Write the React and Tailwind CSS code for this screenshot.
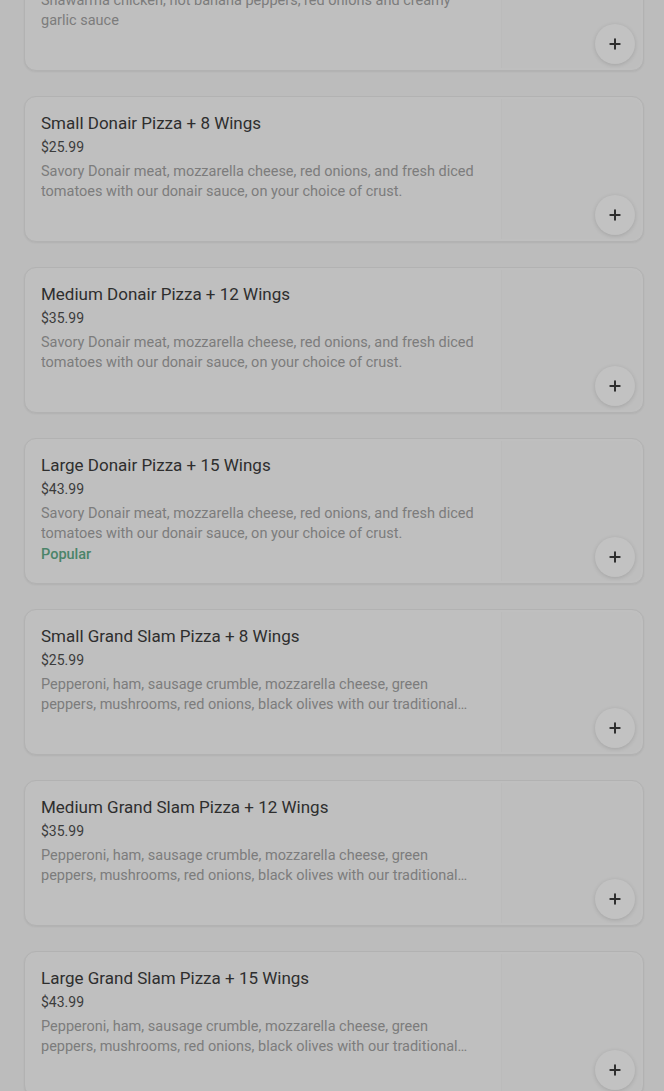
import { Plus } from "lucide-react";

const items = [
  {
    name: "Shawarma Pizza + 8 Wings",
    price: "$25.99",
    desc: "Shawarma chicken, hot banana peppers, red onions and creamy garlic sauce",
  },
  {
    name: "Small Donair Pizza + 8 Wings",
    price: "$25.99",
    desc: "Savory Donair meat, mozzarella cheese, red onions, and fresh diced tomatoes with our donair sauce, on your choice of crust.",
  },
  {
    name: "Medium Donair Pizza + 12 Wings",
    price: "$35.99",
    desc: "Savory Donair meat, mozzarella cheese, red onions, and fresh diced tomatoes with our donair sauce, on your choice of crust.",
  },
  {
    name: "Large Donair Pizza + 15 Wings",
    price: "$43.99",
    desc: "Savory Donair meat, mozzarella cheese, red onions, and fresh diced tomatoes with our donair sauce, on your choice of crust.",
    popular: true,
  },
  {
    name: "Small Grand Slam Pizza + 8 Wings",
    price: "$25.99",
    desc: "Pepperoni, ham, sausage crumble, mozzarella cheese, green peppers, mushrooms, red onions, black olives with our traditional pizza sauce, on your choice of crust.",
  },
  {
    name: "Medium Grand Slam Pizza + 12 Wings",
    price: "$35.99",
    desc: "Pepperoni, ham, sausage crumble, mozzarella cheese, green peppers, mushrooms, red onions, black olives with our traditional pizza sauce, on your choice of crust.",
  },
  {
    name: "Large Grand Slam Pizza + 15 Wings",
    price: "$43.99",
    desc: "Pepperoni, ham, sausage crumble, mozzarella cheese, green peppers, mushrooms, red onions, black olives with our traditional pizza sauce, on your choice of crust.",
  },
];

function ItemCard({ item }) {
  return (
    <div className="relative flex h-[146px] rounded-xl border border-[#b2b2b2] bg-[#bfbfbf] shadow-[0_1px_2px_rgba(0,0,0,0.06)]">
      <div className="w-[472px] shrink-0 pl-4 pr-4 pt-[12px]">
        <h3 className="text-[17px] leading-7 font-normal text-[#2e2e2e]">{item.name}</h3>
        <p className="mt-0 text-[14px] leading-5 text-[#3c3c3c]">{item.price}</p>
        <p className="mt-[5px] line-clamp-2 text-[14.5px] leading-5 text-[#7c7c7c]">{item.desc}</p>
        {item.popular && (
          <p className="mt-[1px] text-[14.5px] leading-5 font-medium text-[#4b8469]">Popular</p>
        )}
      </div>
      <div className="ml-auto my-[2px] mr-[2px] w-[140px] rounded-r-[10px] border-l border-[#bbbbbb] bg-[#bebebe]" />
      <button className="absolute right-[8px] bottom-[6px] flex h-10 w-10 items-center justify-center rounded-full bg-[#c2c2c2] shadow-[0_1px_4px_rgba(0,0,0,0.14)]">
        <Plus size={16} strokeWidth={3} className="text-[#2e2e2e]" />
      </button>
    </div>
  );
}

export default function App() {
  return (
    <div
      className="h-[1091px] overflow-hidden bg-[#bcbcbc] pl-6 pr-5"
      style={{ fontFamily: "Roboto, 'Noto Sans', sans-serif" }}
    >
      <div className="-mt-[75px] flex flex-col gap-[25px]">
        {items.map((item) => (
          <ItemCard key={item.name} item={item} />
        ))}
      </div>
    </div>
  );
}
